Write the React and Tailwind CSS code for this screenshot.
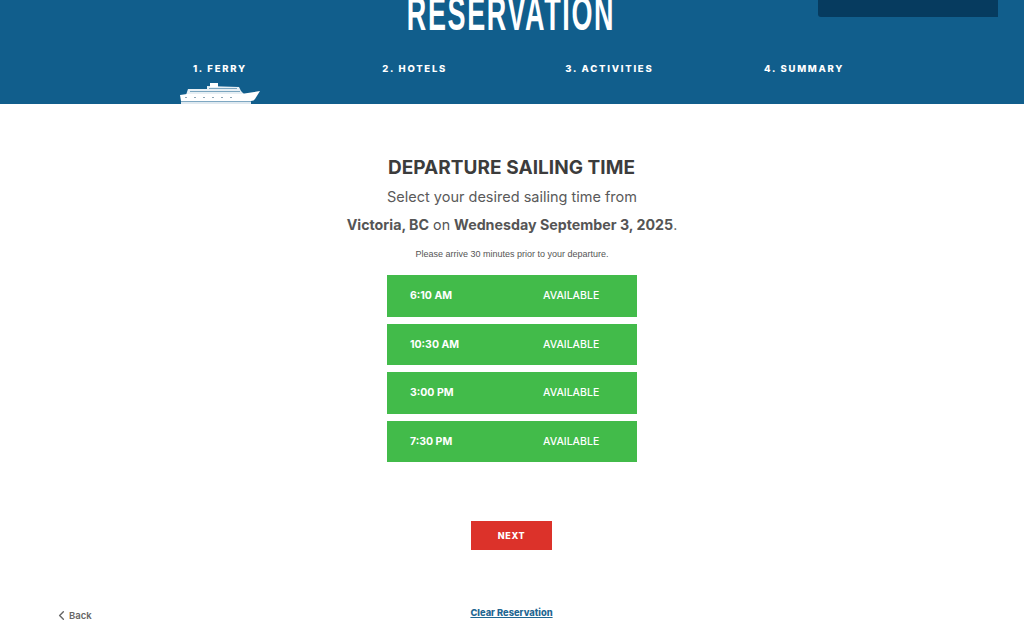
import React from 'react';
import { ChevronLeft } from 'lucide-react';

const steps = ['1. Ferry', '2. Hotels', '3. Activities', '4. Summary'];
const sailings = ['6:10 AM', '10:30 AM', '3:00 PM', '7:30 PM'];

function Ship() {
  return (
    <svg width="82" height="21" viewBox="0 0 82 21" className="block">
      <path d="M1 12 L8 11 L62 11 L81 8 L76 16 Q75 18 72 18 L2 18 Z" fill="#fff" />
      <path d="M9 6 L28 6 L28 3 L60 4 L62 8 L65 11 L7 12 Z" fill="#fff" opacity="0.9" />
      <rect x="31" y="0" width="8" height="4" fill="#fff" />
      <g fill="#115e8c" opacity="0.5">
        <rect x="11" y="8" width="50" height="1" />
        <rect x="30" y="5" width="28" height="1" />
      </g>
      <g fill="#8fa6b5">
        <rect x="6" y="14" width="2" height="1" />
        <rect x="15" y="14" width="2" height="1" />
        <rect x="24" y="14" width="2" height="1" />
        <rect x="33" y="14" width="2" height="1" />
        <rect x="42" y="14" width="2" height="1" />
        <rect x="51" y="14" width="2" height="1" />
      </g>
      <rect x="2" y="18" width="70" height="1" fill="#7fa8c2" />
      <rect x="2" y="19" width="70" height="2" fill="#dfe9f0" />
    </svg>
  );
}

export default function App() {
  return (
    <div className="h-[626px] overflow-hidden bg-white font-['Inter','Liberation_Sans',sans-serif]">
      <header className="relative h-[104px] overflow-hidden bg-[#115e8c]">
        <div className="absolute right-[26px] top-0 h-[17px] w-[180px] rounded-bl-[3px] bg-[#063b5f]" />
        <h1 className="mt-[-14px] mr-[2px] scale-x-[0.55] text-center font-['Liberation_Sans',sans-serif] text-[49px] leading-[54px] font-bold tracking-[3px] text-white">
          RESERVATION
        </h1>
        <nav className="mx-auto mt-[23px] grid w-[779px] grid-cols-4">
          {steps.map((step, i) => (
            <div key={step} className="flex flex-col items-center">
              <span className="text-[9.5px] leading-[12px] font-extrabold tracking-[1.75px] text-white uppercase">{step}</span>
              {i === 0 && <div className="mt-[8px]"><Ship /></div>}
            </div>
          ))}
        </nav>
      </header>

      <main className="flex flex-col items-center pt-[52px]">
        <h2 className="mr-[1px] text-[19px] leading-[24px] font-bold tracking-[0.05px] text-[#3c3c3c]">DEPARTURE SAILING TIME</h2>
        <p className="mt-[7px] text-[14.5px] leading-[20px] text-[#5a5a5a]">Select your desired sailing time from</p>
        <p className="mt-[8px] text-[14.25px] leading-[20px] text-[#555]">
          <span className="font-bold">Victoria, BC</span> on <span className="font-bold">Wednesday September 3, 2025</span>.
        </p>
        <p className="mt-[13px] font-['Liberation_Sans',sans-serif] text-[9px] leading-[12px] text-[#555]">
          Please arrive 30 minutes prior to your departure.
        </p>
        <div className="mt-[15px] flex w-[250px] flex-col gap-[7px]">
          {sailings.map((time) => (
            <button key={time} className="flex h-[41.6px] items-center bg-[#42bb4a] pl-[23px] text-[10.5px] text-white">
              <span className="w-[133px] text-left font-bold">{time}</span>
              <span className="font-medium">AVAILABLE</span>
            </button>
          ))}
        </div>
        <button className="mr-[1px] mt-[59px] h-[29px] w-[81px] bg-[#dc322a] text-[9px] font-extrabold tracking-[0.6px] text-white">
          NEXT
        </button>
        <a href="#" className="mr-[1px] mt-[56px] text-[9.3px] leading-[14px] font-extrabold text-[#1f6792] underline">
          Clear Reservation
        </a>
      </main>

      <a href="#" className="absolute left-[54px] top-[608px] flex items-center text-[9.5px] leading-[14px] font-semibold text-[#666]">
        <ChevronLeft size={15} strokeWidth={2.25} />
        Back
      </a>
    </div>
  );
}
